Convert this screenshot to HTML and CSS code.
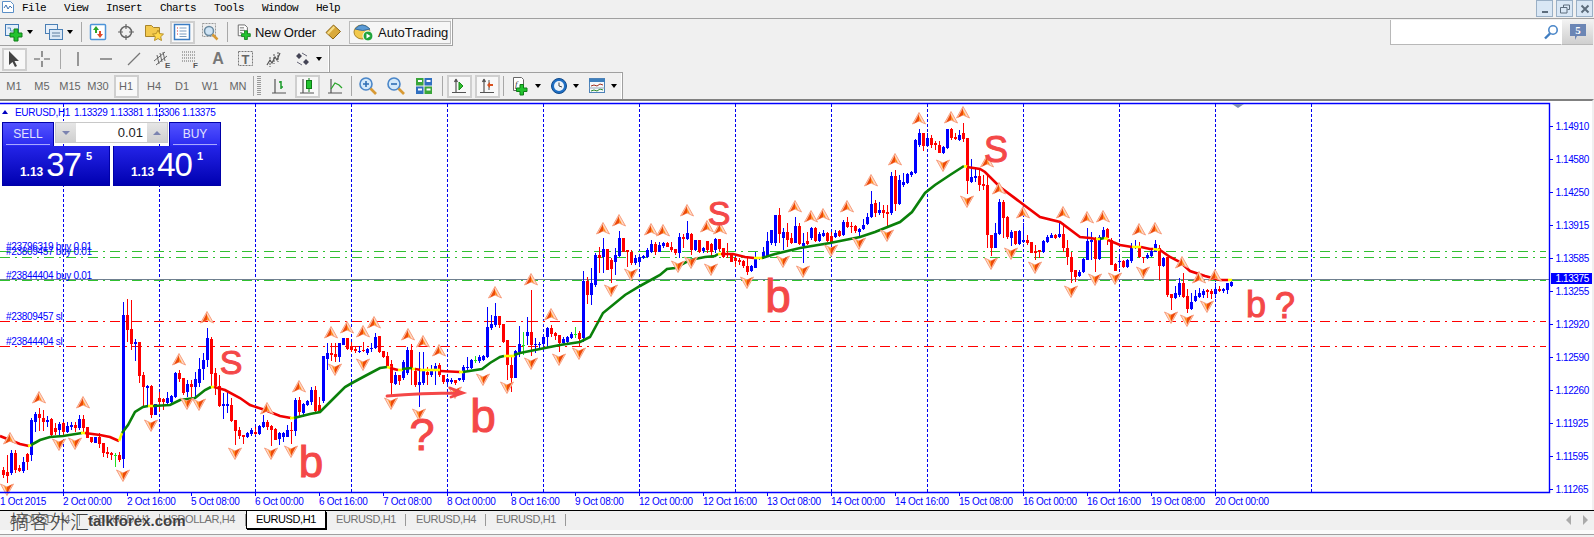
FILE: index.html
```html
<!DOCTYPE html>
<html lang="en">
<head>
    <meta charset="UTF-8">
    <title>MetaTrader 4 - EURUSD,H1</title>
    <link rel="stylesheet" href="styles.css">
</head>
<body>
    <!-- Menu -->
    <div class="menubar">
        <svg class="app-icon" width="14" height="14" viewBox="0 0 14 14"><path d="M1.5 1.5h8l3 3v8h-11z" fill="#fff" stroke="#5b8fc7"/><path d="M3 8l2-3 2 4 2-3 2 2" fill="none" stroke="#3a6fb0"/></svg>
        <nav class="menu">
            <span>File</span><span>View</span><span>Insert</span><span>Charts</span><span>Tools</span><span>Window</span><span>Help</span>
        </nav>
        <div class="window-buttons">
            <button class="win-btn"><svg width="10" height="10" viewBox="0 0 10 10"><path d="M2 7h6v2H2z" fill="#5d6d7d"/></svg></button>
            <button class="win-btn"><svg width="10" height="10" viewBox="0 0 10 10"><path d="M3.5 3V1h6v4.5H7.5M.5 3.5h6.5v5.5H.5z" fill="none" stroke="#5d6d7d"/></svg></button>
            <button class="win-btn"><svg width="10" height="10" viewBox="0 0 10 10"><path d="M1.5 1.5l7 7M8.5 1.5l-7 7" fill="none" stroke="#5d6d7d" stroke-width="2"/></svg></button>
        </div>
    </div>

    <!-- Standard toolbar -->
    <div class="toolrow">
        <div class="toolbar toolbar-standard">
            <div class="tool tool-narrow"><svg width="20" height="20" viewBox="0 0 20 20"><rect x="1.5" y="2.5" width="13" height="11" fill="#e3eefa" stroke="#3f78b4"/><path d="M3.5 6h3v3h3" fill="none" stroke="#5d8fc0"/><path d="M10 7h4v4h4v4h-4v4h-4v-4H6v-4h4z" fill="#22c32e" stroke="#0e7d17"/></svg></div>
            <span class="caret"></span>
            <div class="tool tool-narrow"><svg width="20" height="20" viewBox="0 0 20 20"><rect x="1.5" y="2.5" width="12" height="9" fill="#e8f0f9" stroke="#4a7fb5"/><rect x="5.5" y="7.5" width="13" height="10" fill="#dbe8f6" stroke="#4a7fb5"/><path d="M8 11h8M8 14h8" stroke="#5d7d9d"/></svg></div>
            <span class="caret"></span>
            <span class="sep sep-first"></span>
            <div class="tool"><svg width="20" height="20" viewBox="0 0 20 20"><rect x="2.5" y="2.5" width="15" height="15" rx="1" fill="#fff" stroke="#4d94d8" stroke-width="1.5"/><path d="M8 4l3 4H9v3H7V8H5z" fill="#2aa52a"/><path d="M12 16l-3-4h2V9h2v3h2z" fill="#e04a2a"/></svg></div>
            <div class="tool"><svg width="20" height="20" viewBox="0 0 20 20"><circle cx="10" cy="10" r="5.5" fill="none" stroke="#666" stroke-width="1.5"/><path d="M10 2v5M10 13v5M2 10h5M13 10h5" stroke="#666" stroke-width="1.2"/></svg></div>
            <div class="tool"><svg width="20" height="20" viewBox="0 0 20 20"><path d="M1.5 3.5h6l2 2h6v9h-14z" fill="#f3c94e" stroke="#a8842a"/><path d="M14 8l1.7 3.6 3.8.5-2.800 2.600.8 3.800-3.500-1.900-3.500 1.900.8-3.800-2.800-2.600 3.800-.5z" fill="#ffd84a" stroke="#b8912a"/></svg></div>
            <div class="tool on"><svg width="18" height="18" viewBox="0 0 18 18"><rect x="1.5" y="1.5" width="15" height="15" fill="#fff" stroke="#3a7cc4" stroke-width="1.5"/><path d="M4 5h1M4 8h1M4 11h1" stroke="#d33"/><path d="M6.5 5h7M6.5 8h7M6.5 11h7M6.5 13.5h7" stroke="#7a9cc0"/></svg></div>
            <div class="tool"><svg width="20" height="20" viewBox="0 0 20 20"><rect x="2.5" y="1.5" width="13" height="13" fill="#eee" stroke="#999" stroke-dasharray="2 1"/><circle cx="9" cy="9" r="4.5" fill="#cfe4f5" stroke="#6a8aa0" stroke-width="1.5"/><path d="M12.5 12.5l5 5" stroke="#d89a35" stroke-width="2.5"/></svg></div>
            <span class="sep sep-mid"></span>
            <div class="new-order">
                <svg width="18" height="20" viewBox="0 0 18 20"><path d="M1.5 1.5h8l3 3v10h-11z" fill="#fff" stroke="#555"/><path d="M3.500 5h5M3.500 8h6M3.500 11h3" stroke="#555"/><path d="M9 8.500h3.500V12H16v3.500h-3.500V19H9v-3.500H5.500V12H9z" fill="#22c32e" stroke="#0e7d17"/></svg>
                <span>New Order</span>
            </div>
            <div class="tool tool-gold"><svg width="18" height="18" viewBox="0 0 18 18"><path d="M2 9.5L9.500 2 16.500 8.500 9 16z" fill="#d9a93a" stroke="#8a6312"/><path d="M3 10l6.500-7 1.500 1.500-6.500 7z" fill="#f6dc85"/></svg></div>
            <div class="autotrading">
                <svg width="22" height="20" viewBox="0 0 22 20"><ellipse cx="9" cy="10" rx="8" ry="7" fill="#f2c94c" stroke="#a8842a"/><path d="M2 7q7-8 15 0-7 3-15 0z" fill="#5b9bd5" stroke="#3a6fa0"/><circle cx="15" cy="14" r="5" fill="#1fa33a" stroke="#fff"/><path d="M13.500 11.500v5l4-2.500z" fill="#fff"/></svg>
                <span>AutoTrading</span>
            </div>
        </div>
        <div class="search-area">
            <div class="search-box"><svg width="16" height="16" viewBox="0 0 16 16"><circle cx="10" cy="6" r="4.2" fill="none" stroke="#4a86c8" stroke-width="1.6"/><path d="M7 9.500L2 14.500" stroke="#3f7cc0" stroke-width="2.4"/></svg></div>
            <div class="notify"><svg width="18" height="18" viewBox="0 0 18 18"><path d="M1 1h16v12H8l-2 4v-4H1z" fill="#6b86b5"/><text x="9" y="11" class="notify-num">5</text></svg></div>
        </div>
    </div>

    <!-- Line studies toolbar -->
    <div class="toolrow">
        <div class="toolbar toolbar-studies">
            <div class="tool on"><svg width="16" height="18" viewBox="0 0 16 18"><path d="M3 1v14l3.500-3 2.500 5 2-1-2.500-5H13z" fill="#444"/></svg></div>
            <div class="tool"><svg width="18" height="18" viewBox="0 0 18 18"><path d="M9 1v6M9 11v6M1 9h6M11 9h6" stroke="#555" stroke-width="1.2"/></svg></div>
            <span class="sep sep-tool"></span>
            <div class="tool"><svg width="18" height="18" viewBox="0 0 18 18"><path d="M9 2v14" stroke="#666" stroke-width="1.3"/></svg></div>
            <div class="tool"><svg width="18" height="18" viewBox="0 0 18 18"><path d="M3 9h12" stroke="#666" stroke-width="1.3"/></svg></div>
            <div class="tool"><svg width="18" height="18" viewBox="0 0 18 18"><path d="M3 15L15 3" stroke="#777" stroke-width="1.3"/></svg></div>
            <div class="tool"><svg width="20" height="20" viewBox="0 0 20 20"><path d="M2 12L13 3M4 16L15 7M5 6l2 9M8 4l2 9M11 3l2 9" stroke="#666" fill="none"/><text x="13" y="19" class="tool-letter">E</text></svg></div>
            <div class="tool"><svg width="20" height="20" viewBox="0 0 20 20"><path d="M2 3h14M2 6h14M2 9h14M2 12h14" stroke="#666" stroke-dasharray="1 1"/><text x="13" y="19" class="tool-letter">F</text></svg></div>
            <div class="tool tool-a">A</div>
            <div class="tool"><svg width="18" height="18" viewBox="0 0 18 18"><rect x="1.5" y="1.5" width="14" height="14" fill="none" stroke="#777" stroke-dasharray="2 1"/><text x="8.500" y="13.500" class="tool-t">T</text></svg></div>
            <div class="tool"><svg width="18" height="18" viewBox="0 0 18 18"><path d="M2 15l3-5 2 3 3-6 2 3 3-7" fill="none" stroke="#555" stroke-width="1.2"/><path d="M5 7v10M9 4v10M13 2v10" stroke="#555" stroke-dasharray="2 1"/></svg></div>
            <div class="tool"><svg width="18" height="18" viewBox="0 0 18 18"><path d="M3 6l3-3 3 3-3 3zM10 12l3-3 3 3-3 3z" fill="#445"/><path d="M4 12l5 3M9 3l5 3" stroke="#667"/></svg></div>
            <span class="caret"></span>
        </div>
    </div>

    <!-- Charts and periodicity toolbars -->
    <div class="toolrow toolrow-last">
        <div class="toolbar toolbar-charts">
            <div class="tool period">M1</div>
            <div class="tool period">M5</div>
            <div class="tool period">M15</div>
            <div class="tool period">M30</div>
            <div class="tool period on">H1</div>
            <div class="tool period">H4</div>
            <div class="tool period">D1</div>
            <div class="tool period">W1</div>
            <div class="tool period">MN</div>
            <span class="sep sep-handle"></span>
            <span class="handle"></span>
            <div class="tool"><svg width="18" height="18" viewBox="0 0 18 18"><path d="M5 2v14M2 16h14" stroke="#555" stroke-width="1.2"/><path d="M11 4v8M11 5H9M11 10h2" stroke="#1a9a2a" stroke-width="1.5"/></svg></div>
            <div class="tool on"><svg width="18" height="18" viewBox="0 0 18 18"><path d="M5 2v14M2 16h14" stroke="#555" stroke-width="1.2"/><rect x="8.500" y="3.500" width="5" height="8" fill="#22c32e" stroke="#0e7d17"/><path d="M11 1v2M11 12v3" stroke="#0e7d17"/></svg></div>
            <div class="tool"><svg width="18" height="18" viewBox="0 0 18 18"><path d="M5 2v14M2 16h14" stroke="#555" stroke-width="1.2"/><path d="M5 12l4-6 4 2 3 3" fill="none" stroke="#2aa52a" stroke-width="1.3"/></svg></div>
            <span class="sep sep-zoom"></span>
            <div class="tool"><svg width="20" height="20" viewBox="0 0 20 20"><circle cx="8" cy="8" r="6" fill="#d3e9fa" stroke="#4a86c8" stroke-width="1.6"/><path d="M5 8h6M8 5v6" stroke="#2f6fb5" stroke-width="1.6"/><path d="M12.500 12.500l5.500 5.500" stroke="#d89a35" stroke-width="2.6"/></svg></div>
            <div class="tool"><svg width="20" height="20" viewBox="0 0 20 20"><circle cx="8" cy="8" r="6" fill="#d3e9fa" stroke="#4a86c8" stroke-width="1.6"/><path d="M5 8h6" stroke="#2f6fb5" stroke-width="1.6"/><path d="M12.500 12.500l5.500 5.500" stroke="#d89a35" stroke-width="2.6"/></svg></div>
            <div class="tool"><svg width="18" height="18" viewBox="0 0 18 18"><rect x="1" y="1" width="7.5" height="7.5" fill="#3aa63a"/><rect x="9.5" y="1" width="7.5" height="7.5" fill="#2f6fc0"/><rect x="1" y="9.5" width="7.5" height="7.5" fill="#2f6fc0"/><rect x="9.5" y="9.5" width="7.5" height="7.5" fill="#3aa63a"/><path d="M3 4h4M11.500 4h4M3 12.500h4M11.500 12.500h4" stroke="#fff" stroke-width="2"/></svg></div>
            <span class="sep sep-auto"></span>
            <div class="tool on"><svg width="18" height="18" viewBox="0 0 18 18"><path d="M6 2v14M2 15.500h14M6 2L4.500 5M6 2l1.500 3" fill="none" stroke="#555" stroke-width="1.2"/><path d="M9 5v8l4-4z" fill="#30c030" stroke="#1a8a1a"/></svg></div>
            <div class="tool on"><svg width="18" height="18" viewBox="0 0 18 18"><path d="M6 2v14M2 15.500h14M6 2L4.500 5M6 2l1.500 3" fill="none" stroke="#555" stroke-width="1.2"/><path d="M11 3v10" stroke="#555"/><path d="M9 8l3-3v2h3v2h-3v2z" fill="#d8501e"/></svg></div>
            <span class="sep sep-ind"></span>
            <div class="tool"><svg width="20" height="20" viewBox="0 0 20 20"><path d="M2.500 1.500h8l2 2v11h-10z" fill="#fff" stroke="#666"/><text x="4" y="11" class="tool-f">f</text><path d="M9 8.500h3.500V12H16v3.500h-3.500V19H9v-3.500H5.500V12H9z" fill="#22c32e" stroke="#0e7d17"/></svg></div>
            <span class="caret"></span>
            <div class="tool"><svg width="18" height="18" viewBox="0 0 18 18"><circle cx="9" cy="9" r="7.5" fill="#1f6fc4" stroke="#114a8a"/><circle cx="9" cy="9" r="5" fill="#eef4fa"/><path d="M9 5.500V9l3 1" fill="none" stroke="#444"/></svg></div>
            <span class="caret"></span>
            <div class="tool"><svg width="18" height="18" viewBox="0 0 18 18"><rect x="1.5" y="1.5" width="15" height="14" fill="#f4f8fb" stroke="#4d82b8"/><path d="M1 2h16v3H1z" fill="#3d7fbd"/><path d="M3 9l3-1 3 1 3-2 3 1" fill="none" stroke="#a03020"/><path d="M3 14l3-1 3 1 3-2 3 1" fill="none" stroke="#2a8a2a"/><path d="M1.5 11h15" stroke="#9ab"/></svg></div>
            <span class="caret"></span>
        </div>
    </div>

    <!-- Chart window -->
    <div class="chart">
        <div id="chartCanvas"></div>

        <div class="trade-panel">
            <div class="trade-top">
                <div class="trade-btn">SELL</div>
                <div class="lot">
                    <span class="spin"><i class="tri tri-down"></i></span>
                    <span class="lot-value">0.01</span>
                    <span class="spin"><i class="tri tri-up"></i></span>
                </div>
                <div class="trade-btn">BUY</div>
            </div>
            <div class="trade-prices">
                <div class="quote"><span class="quote-small">1.13</span><span class="quote-big">37</span><span class="quote-sup">5</span></div>
                <div class="quote"><span class="quote-small">1.13</span><span class="quote-big">40</span><span class="quote-sup">1</span></div>
            </div>
        </div>
    </div>

    <!-- Chart tabs -->
    <div class="tabs">
        <div class="tab">AUDUSD,H4</div>
        <div class="tab">GBPUSD,H1</div>
        <div class="tab tab-wide">USDOLLAR,H4</div>
        <div class="tab active">EURUSD,H1</div>
        <div class="tab">EURUSD,H1</div>
        <div class="tab">EURUSD,H4</div>
        <div class="tab">EURUSD,H1</div>
        <div class="tab-arrows"><i class="tri tri-left"></i><i class="tri tri-right"></i></div>
        <div class="watermark"><span class="wm-cn">摘客外汇</span><span class="wm-en">talkforex.com</span></div>
    </div>

    <script src="chart.js"></script>
</body>
</html>
```

FILE: styles.css
```css
:root {
    --chrome: #f0f0f0;
    --line: #a0a0a0;
    --chart-blue: #0000ff;
    --toggle-bg: #f8f8f8;
    --toggle-line: #cfcfcf;
    --tool-text: #666;
}

* {
    box-sizing: border-box;
}

html, body {
    height: 537px;
    overflow: hidden;
}

body {
    margin: 0;
    background: var(--chrome);
    font-family: "Liberation Sans", Arial, sans-serif;
    font-size: 12px;
    color: #111;
}

/* Menu */
.menubar {
    height: 19px;
    display: flex;
    align-items: flex-start;
    border-bottom: 1px solid var(--line);
    position: relative;
}

.app-icon {
    margin: 0 0 0 1px;
}

.menu {
    display: flex;
    gap: 18px;
    margin-left: 7px;
    padding-top: 1px;
    font-family: "Liberation Mono", monospace;
    font-size: 11px;
    letter-spacing: -0.6px;
    line-height: 14px;
    color: #000;
}

.window-buttons {
    margin-left: auto;
    margin-right: 1px;
    display: flex;
    gap: 3px;
}

.win-btn {
    width: 17px;
    height: 17px;
    padding: 0;
    display: flex;
    align-items: center;
    justify-content: center;
    background: #d9e7f5;
    border: 1px solid #9ab0c6;
}

/* Toolbars */
.toolrow {
    display: flex;
    justify-content: space-between;
    height: 27px;
}

.toolrow + .toolrow {
    height: 26px;
}

.toolrow-last.toolrow {
    height: 27px;
    border-bottom: 0;
}

.toolbar {
    display: flex;
    align-items: center;
    border-right: 1px solid var(--line);
    box-shadow: inset -1px 0 0 #fff;
}

.toolbar-standard {
    width: 453px;
    border-bottom: 1px solid var(--line);
}

.toolbar-studies {
    width: 330px;
}

.toolbar-charts {
    width: 623px;
    border-top: 1px solid var(--line);
}

.tool {
    width: 28px;
    height: 24px;
    flex: none;
    display: flex;
    align-items: center;
    justify-content: center;
}

.tool-narrow {
    width: 27px;
}

.tool-narrow + .caret {
    margin-right: 3px;
}

.tool-gold {
    margin-left: 3px;
}

.tool-a {
    font-size: 16px;
    font-weight: bold;
    color: #777;
}

.tool-letter {
    font: bold 8px "Liberation Sans", sans-serif;
    fill: #555;
}

.tool-t {
    font: bold 13px "Liberation Sans", sans-serif;
    fill: #666;
    text-anchor: middle;
}

.tool-f {
    font: italic 9px "Liberation Serif", serif;
    fill: #333;
}

.tool.on {
    width: 25px;
    height: 23px;
    margin: 0 1.5px;
    background: var(--toggle-bg);
    border: 2px solid var(--toggle-line);
}

.period {
    font-size: 11px;
    color: var(--tool-text);
}

.sep {
    width: 1px;
    height: 20px;
    flex: none;
    background: #a8a8a8;
}

.sep-first { margin: 0 2px 0 1px; }
.sep-mid { margin: 0 0 0 3px; }
.sep-tool { margin: 0 3px 0 4px; }
.sep-handle { margin: 0 3px 0 1px; }
.sep-zoom { margin: 0 2px; }
.sep-auto { margin: 0 2px 0 4px; }
.sep-ind { margin: 0 3px 0 2px; }

.handle {
    width: 4px;
    height: 20px;
    flex: none;
    margin-right: 4px;
    background: repeating-linear-gradient(#999 0 1px, transparent 1px 2px);
}

.caret {
    width: 10px;
    height: 4px;
    flex: none;
    position: relative;
}

.caret::before {
    content: "";
    position: absolute;
    left: 0;
    top: 0;
    border-style: solid;
    border-width: 4px 3.5px 0;
    border-color: #000 transparent transparent;
}

.new-order {
    display: flex;
    align-items: center;
    gap: 3px;
    margin-left: 9px;
    font-size: 13px;
    width: 79px;
    flex: none;
    white-space: nowrap;
}

.new-order span {
    letter-spacing: -0.2px;
}

.autotrading {
    width: 102px;
    height: 23px;
    flex: none;
    margin-left: 2px;
    display: flex;
    align-items: center;
    gap: 3px;
    padding-left: 3px;
    font-size: 13px;
    background: #f6f6f6;
    border: 1px solid #bbb;
}

/* Search */
.search-area {
    display: flex;
    height: 25px;
    margin-top: 1px;
    margin-right: 1px;
    width: 203px;
}

.search-box {
    width: 171px;
    display: flex;
    align-items: center;
    justify-content: flex-end;
    padding-right: 2px;
    background: #fff;
    border-left: 1px solid #b8b8b8;
    border-bottom: 1px solid #b8b8b8;
}

.notify {
    flex: 1;
    display: flex;
    align-items: center;
    justify-content: center;
    background: linear-gradient(#f2f2f2, #cfcfcf);
    border-bottom: 1px solid #b8b8b8;
    border-left: 1px solid #fff;
}

.notify-num {
    font: bold 11px "Liberation Serif", serif;
    fill: #fff;
    text-anchor: middle;
}

/* Chart */
.chart {
    height: 411px;
    position: relative;
    background: #fff;
    border-top: 2px solid #808080;
    border-right: 2px solid var(--chrome);
}

#chartCanvas svg {
    display: block;
}

.axis-text {
    font: 10px "Liberation Sans", Arial, sans-serif;
    letter-spacing: -0.3px;
    fill: var(--chart-blue);
}

.price-text {
    letter-spacing: -0.4px;
}

.price-now {
    fill: #fff;
}

.scribble {
    font-family: "Liberation Sans", Arial, sans-serif;
    fill: #f44848;
    stroke: #f44848;
    stroke-width: 1px;
    text-anchor: middle;
}

/* One click trading panel */
.trade-panel {
    position: absolute;
    left: 2px;
    top: 21px;
    width: 219px;
    color: #fff;
}

.trade-top {
    display: flex;
    height: 24px;
}

.trade-btn {
    width: 52px;
    flex: none;
    padding-top: 3px;
    text-align: center;
    font-size: 12px;
    line-height: 17px;
    color: #e2e2ff;
    background: linear-gradient(#5252ff, #2a2af0);
    border: 1px solid #0000a8;
    border-bottom: 0;
    position: relative;
}

.trade-btn::after {
    content: "";
    position: absolute;
    left: 3px;
    right: 3px;
    bottom: 1px;
    height: 1px;
    background: #a8a8ff;
}

.lot {
    flex: 1;
    display: flex;
    margin: 0 1px 3px;
    background: #fff;
    border: 1px solid #c8c8c8;
    box-shadow: 0 0 0 1px #fff;
    color: #222;
}

.spin {
    width: 20px;
    flex: none;
    display: flex;
    align-items: center;
    justify-content: center;
    background: linear-gradient(#e6e6e6, #cfcfcf);
}

.lot-value {
    flex: 1;
    padding-right: 4px;
    text-align: right;
    font-size: 13px;
    line-height: 20px;
}

.trade-prices {
    display: flex;
    gap: 3px;
}

.quote {
    flex: 1;
    height: 40px;
    display: flex;
    justify-content: center;
    align-items: baseline;
    padding-top: 2px;
    background: linear-gradient(#2424e8, #0000b0);
    border: 1px solid #0000a8;
    border-top: 0;
    line-height: 34px;
}

.quote-small {
    font-size: 12px;
    font-weight: bold;
    margin-right: 3px;
}

.quote-big {
    font-size: 33px;
    letter-spacing: -1px;
}

.quote-sup {
    font-size: 11px;
    font-weight: bold;
    margin-left: 5px;
    position: relative;
    top: -16px;
}

.tri {
    display: block;
    width: 0;
    height: 0;
    border-style: solid;
}

.tri-down {
    border-width: 4px 4px 0;
    border-color: #7b83b0 transparent transparent;
}

.tri-up {
    border-width: 0 4px 4px;
    border-color: transparent transparent #7b83b0;
}

.tri-left {
    border-width: 5px 5px 5px 0;
    border-color: transparent #aaa transparent transparent;
}

.tri-right {
    border-width: 5px 0 5px 5px;
    border-color: transparent transparent transparent #aaa;
}

/* Tabs */
.tabs {
    height: 25px;
    display: flex;
    align-items: flex-start;
    position: relative;
    font-size: 11px;
    letter-spacing: -0.4px;
    color: #707070;
    border-top: 1px solid #000;
    box-shadow: inset 0 -1px 0 var(--line), inset 0 -5px 0 #fbfbfb;
}

.tab {
    width: 80px;
    height: 18px;
    flex: none;
    line-height: 17px;
    text-align: center;
    position: relative;
}

.tab-wide {
    width: 86px;
    padding-right: 8px;
}

.tab::after {
    content: "";
    position: absolute;
    right: 0;
    top: 3px;
    height: 12px;
    border-right: 1px solid #999;
}

.tab.active {
    background: #fff;
    color: #000;
    border: 1px solid #000;
    border-top: 0;
    box-shadow: 1px 1px 0 #000;
}

.tab.active::after {
    display: none;
}

.tab-arrows {
    margin-left: auto;
    margin-right: 6px;
    margin-top: 4px;
    display: flex;
    gap: 12px;
}

.watermark {
    position: absolute;
    left: 10px;
    top: -2px;
    display: flex;
    align-items: center;
    height: 22px;
    color: #404040;
    letter-spacing: 0;
}

.wm-cn {
    width: 78px;
    font-family: "Noto Sans CJK SC", sans-serif;
    font-size: 19px;
    font-weight: 300;
    letter-spacing: 1px;
    white-space: nowrap;
}

.wm-en {
    font-size: 15px;
    font-weight: bold;
    text-shadow: 0 0 2px #fff;
}
```

FILE: chart.js
```js
// [colour, body top, body bottom, high, low] in page pixels, one bar every 4px
const BARS = [
    ['r',470,475,467,478],['r',472,476,455,483],['b',453,473,450,475],['r',453,470,450,473],['r',468,471,465,472],
    ['b',462,471,457,473],['r',454,462,453,470],['b',420,455,418,461],['b',414,422,412,432],['r',414,418,408,431],
    ['r',418,422,410,431],['b',420,422,416,427],['r',419,435,418,436],['r',428,432,423,435],['b',424,430,422,436],
    ['r',423,432,422,436],['b',426,432,422,433],['b',425,427,422,430],['r',425,428,422,432],['b',419,428,415,430],
    ['r',419,428,415,433],['r',427,438,427,438],['r',437,442,437,443],['b',437,443,437,443],['r',437,444,433,448],
    ['r',443,453,443,457],['r',452,454,447,458],['r',453,455,452,460],['g',455,456,453,467],['r',455,460,452,462],
    ['b',315,459,302,468],['r',315,330,299,342],['r',329,344,300,350],['b',342,344,339,361],['r',342,376,342,383],
    ['r',375,387,372,407],['b',386,388,385,406],['r',386,415,385,418],['b',404,415,404,415],['r',398,402,392,412],
    ['r',399,402,398,410],['b',398,403,392,406],['b',396,402,395,403],['b',373,397,372,398],['r',373,379,370,382],
    ['r',378,393,378,395],['b',384,392,380,397],['r',384,387,380,397],['b',379,387,372,397],['b',369,383,358,387],
    ['b',360,369,353,380],['b',338,360,328,367],['r',339,374,337,387],['r',373,386,368,395],['r',386,406,375,407],
    ['b',404,406,393,419],['b',404,406,392,413],['r',405,421,398,422],['r',420,431,420,445],['r',430,436,427,439],
    ['r',435,437,435,444],['b',433,437,432,438],['b',430,434,428,436],['r',432,434,427,435],['b',426,434,425,435],
    ['b',422,427,415,428],['r',422,427,420,430],['r',426,430,425,446],['r',429,440,428,440],['b',433,439,432,445],
    ['b',433,437,432,442],['b',430,437,425,437],['r',430,431,422,444],['b',400,431,398,436],['r',400,412,397,417],
    ['b',404,413,403,417],['b',401,405,400,406],['b',390,402,387,405],['r',390,411,386,412],['r',405,411,397,412],
    ['b',356,401,356,403],['b',353,359,343,370],['r',353,355,343,361],['r',354,357,343,362],['b',343,357,343,362],
    ['b',338,345,338,345],['r',338,349,338,350],['r',346,350,342,352],['r',349,351,347,353],['b',351,352,346,353],
    ['r',350,351,342,352],['b',349,353,348,355],['b',348,349,343,352],['b',337,348,333,349],['r',336,352,336,353],
    ['r',351,357,351,358],['r',356,366,352,367],['r',364,383,360,395],['b',375,384,372,385],['r',375,381,375,385],
    ['b',362,378,360,380],['b',350,373,347,375],['r',350,368,344,385],['r',371,385,370,387],['b',382,385,352,407],
    ['b',370,383,352,385],['r',372,375,367,385],['b',369,375,365,377],['b',366,370,363,385],['r',365,375,363,377],
    ['r',375,382,375,384],['b',379,382,378,384],['b',380,382,378,384],['r',380,383,380,385],['b',378,380,378,381],
    ['b',367,380,365,382],['b',367,368,357,370],['b',360,368,359,369],['g',360,361,356,363],['b',357,361,355,363],
    ['b',356,360,355,361],['b',327,357,307,358],['b',324,328,315,330],['b',316,325,303,327],['r',316,325,316,328],
    ['r',324,342,324,343],['r',340,365,340,380],['r',365,378,357,392],['b',351,378,350,374],['b',344,352,326,357],
    ['g',345,346,332,355],['b',332,336,317,345],['r',332,345,290,356],['b',344,345,338,353],['b',344,345,342,350],
    ['b',337,344,335,352],['b',328,337,327,348],['r',328,334,325,337],['r',333,336,332,340],['r',335,343,335,352],
    ['b',339,343,337,345],['b',337,342,336,343],['b',334,338,332,339],['g',334,335,327,338],['r',333,339,331,347],
    ['b',281,338,271,342],['r',281,295,277,304],['b',283,295,268,305],['b',255,285,253,287],['r',255,258,247,273],
    ['b',249,257,238,273],['r',249,270,249,270],['r',260,269,258,283],['b',255,262,248,275],['b',238,256,231,257],
    ['r',238,252,238,252],['r',250,252,250,267],['r',252,263,250,265],['b',258,263,255,265],['b',257,262,255,267],
    ['b',256,258,255,259],['b',250,257,248,258],['b',244,252,240,253],['r',244,252,242,255],['b',245,252,242,252],
    ['b',243,246,242,248],['r',243,247,242,247],['r',247,250,242,252],['r',249,253,249,255],['b',237,253,233,258],
    ['r',237,239,234,248],['b',233,239,221,240],['r',234,250,233,255],['b',240,250,240,251],['r',240,252,240,253],
    ['b',248,251,247,253],['r',241,250,241,253],['r',244,252,243,258],['b',239,250,238,253],['r',239,249,239,251],
    ['r',248,257,248,258],['r',253,255,243,258],['r',255,262,253,262],['r',258,261,257,267],['r',260,262,258,265],
    ['r',261,266,260,268],['r',266,272,258,275],['b',266,271,265,272],['b',258,268,252,268],['b',257,258,257,260],
    ['b',252,257,247,259],['b',241,257,232,257],['b',230,243,230,245],['b',215,243,215,246],['r',215,234,208,243],
    ['b',232,238,228,250],['r',232,240,223,247],['r',238,243,233,244],['b',226,243,217,243],['r',226,244,223,245],
    ['b',243,246,233,263],['r',241,244,232,245],['b',228,238,227,240],['r',228,241,227,242],['b',234,241,232,242],
    ['b',233,236,230,237],['r',233,241,232,242],['r',236,242,232,243],['b',233,237,230,238],['r',231,236,230,237],
    ['b',222,235,220,236],['r',222,227,217,228],['r',226,227,222,233],['r',226,231,225,233],['b',229,232,228,237],
    ['b',225,229,219,230],['b',217,224,213,225],['b',204,217,191,218],['r',203,213,200,217],['b',210,213,202,215],
    ['r',210,213,205,218],['r',212,214,205,227],['b',176,213,172,215],['r',176,204,170,211],['b',180,204,175,205],
    ['b',182,185,173,187],['b',174,183,173,184],['b',172,175,171,177],['b',140,173,139,174],['b',133,145,129,147],
    ['r',133,146,133,151],['b',138,146,133,147],['r',138,145,135,148],['r',143,145,141,150],['r',145,153,141,153],
    ['b',147,153,146,154],['b',129,148,129,149],['r',129,138,128,140],['r',137,139,133,140],['b',135,140,130,141],
    ['r',133,139,123,142],['r',138,181,138,194],['b',177,182,159,183],['b',176,178,168,182],['r',176,185,168,191],
    ['r',184,186,175,190],['r',185,235,175,248],['r',235,248,235,256],['b',233,248,223,248],['b',202,234,199,235],
    ['r',202,218,200,238],['r',217,237,216,239],['b',232,238,230,246],['r',231,244,231,245],['b',231,244,230,245],
    ['b',240,242,223,243],['r',240,243,235,245],['r',242,253,242,253],['r',251,253,245,260],['r',250,252,250,258],
    ['b',241,252,240,253],['b',237,242,235,243],['b',235,238,233,238],['r',235,238,234,239],['b',234,237,223,238],
    ['r',234,248,223,252],['r',248,257,240,265],['r',257,272,252,283],['r',270,277,270,282],['b',272,276,270,277],
    ['b',259,272,258,273],['b',241,260,228,260],['b',240,242,232,260],['r',240,259,237,272],['b',237,259,235,260],
    ['b',230,238,227,239],['r',229,238,228,245],['r',240,265,238,265],['r',264,271,263,271],['b',261,262,257,268],
    ['r',261,267,260,268],['b',260,267,259,268],['b',247,261,243,263],['b',247,248,240,249],['r',247,257,242,258],
    ['r',257,258,257,263],['b',255,258,253,259],['b',251,256,248,257],['b',244,252,240,252],['r',248,266,245,280],
    ['b',258,266,257,267],['r',257,295,257,297],['r',294,298,294,310],['b',293,298,286,299],['b',283,295,278,297],
    ['r',283,297,273,298],['r',296,309,289,313],['b',302,309,293,310],['b',296,301,290,302],['b',293,297,288,298],
    ['b',291,295,289,298],['r',290,292,289,298],['r',291,294,289,299],['b',289,294,283,298],['r',289,291,286,292],
    ['b',289,291,288,293],['b',283,290,283,294],['b',282,286,279,287]
];

// moving average pieces: it flips colour on each trend change, with a short yellow link
const MA = [
    ['r','0,436 10,440 20,444 29,446'],['y','28,446 32,445'],['g','31,445 40,440 50,437 63,436 82,433'],
    ['y','81,433 86,433'],['r','85,433 100,435 110,437 119,441'],['y','119,441 122,433'],
    ['g','122,433 128,425 135,412 143,407 148,406'],['y','148,406 154,406'],
    ['g','153,406 170,405 180,400 195,398 205,390 211,387'],['y','211,387 215,387'],
    ['r','214,387 225,390 240,398 250,405 265,410 280,416 291,418'],['y','290,418 295,418'],
    ['g','294,418 310,414 320,412 335,397 345,387 352,383 365,376 380,368 387,367'],['y','387,367 391,368'],
    ['r','390,368 398,370'],['y','398,370 403,370'],['g','402,369 412,368'],['y','412,369 416,369'],
    ['r','415,369 421,370'],['y','420,370 440,370'],['r','440,371 460,372'],['y','459,372 464,372'],
    ['g','463,372 482,369 490,363 500,357 504,356'],['y','504,356 515,356'],
    ['g','514,355 520,353 540,349 560,345 580,342 590,337 603,313 625,295 640,286 660,275 667,269 675,268 690,260 705,257 715,256 718,254'],
    ['y','718,254 722,254'],['r','721,254 733,254 745,257 754,258'],['y','754,258 763,258'],
    ['g','762,258 775,254 800,248 830,243 860,237 875,232 900,222 912,212 925,193 935,185 950,175 964,166'],
    ['y','964,166 968,167'],['r','967,167 980,169 985,172 1000,187 1020,202 1040,217 1060,222 1080,237 1090,238 1096,239'],
    ['y','1096,239 1100,239'],['g','1100,239 1104,238'],['y','1104,238 1108,239'],['r','1108,240 1120,245 1132,247'],
    ['y','1132,247 1141,247'],['r','1141,247 1150,249 1153,249'],['y','1153,249 1160,250'],
    ['r','1160,250 1170,257 1180,262 1190,271 1205,276 1220,280 1228,280'],['y','1228,280 1232,280']
];

const ARROWS_UP = [
    [39,398],[83,403],[10,439],[179,360],[207,318],[331,333],[347,328],[363,332],[374,323],[299,387],[267,409],[408,335],
    [423,342],[439,351],[495,293],[531,280],[551,315],[603,229],[619,221],[651,230],[663,231],[687,211],[707,227],[720,229],
    [795,207],[811,217],[823,215],[847,207],[871,181],[895,160],[919,119],[951,118],[963,113],[987,162],[999,189],[1023,213],
    [1063,213],[1087,218],[1103,217],[1139,230],[1155,229],[1182,263],[1199,278],[1215,276]
];

const ARROWS_DOWN = [
    [7,489],[59,444],[75,443],[123,475],[151,425],[187,403],[199,404],[235,453],[271,453],[291,451],[335,369],[363,364],
    [391,403],[419,414],[455,392],[483,379],[507,387],[531,363],[559,359],[579,353],[611,290],[631,274],[678,266],[691,262],
    [711,269],[747,282],[783,261],[803,271],[831,250],[859,243],[887,235],[943,165],[967,201],[991,263],[1011,253],[1035,267],
    [1071,291],[1095,279],[1115,278],[1143,272],[1171,317],[1187,320],[1207,306]
];

// the red marks somebody wrote on the chart
const SCRIBBLES = [
    ['S',231,374,34],['S',719,225,34],['S',996,162,36],
    ['b',311,477,44],['b',483,432,46],['b',778,312,46],['b',1256,317,36],
    ['?',422,450,45],['?',1285,318,36]
];

const TIMES = ['2 Oct 00:00','2 Oct 16:00','5 Oct 08:00','6 Oct 00:00','6 Oct 16:00','7 Oct 08:00','8 Oct 00:00','8 Oct 16:00',
    '9 Oct 08:00','12 Oct 00:00','12 Oct 16:00','13 Oct 08:00','14 Oct 00:00','14 Oct 16:00','15 Oct 08:00','16 Oct 00:00',
    '16 Oct 16:00','19 Oct 08:00','20 Oct 00:00'];

const PRICES = ['1.14910','1.14580','1.14250','1.13915','1.13585','1.13255','1.12920','1.12590','1.12260','1.11925','1.11595','1.11265'];

const ORDER_LABELS = [
    ['#23796319 buy 0.01',250],['#23809457 buy 0.01',255],['#23844404 buy 0.01',279],['#23809457 sl',320],['#23844404 sl',345]
];

const COLORS = { b: '#0000ff', r: '#ff0000', g: '#20e020' };
const MA_COLORS = { r: '#f00000', g: '#0a800a', y: '#ffff00' };

function drawChart() {
    let s = '<svg width="1592" height="409" viewBox="0 101 1592 409">';

    s += '<defs>'
        + '<g id="arrowUp"><path d="M0-6.5L6.5 5 0 2-6.5 5z" fill="#ffd8c4" stroke="#f8a080"/><path d="M0-5L-5 4.500 0 2z" fill="#ee4a08"/><path d="M0-3L3 3 0 1.500z" fill="#ff8a20"/></g>'
        + '<g id="arrowDown"><path d="M0 6.5L6.5-5 0-2-6.500-5z" fill="#ffd8c4" stroke="#f8a080"/><path d="M0 4L-3-3 0-1.500z" fill="#ff8a20"/><path d="M0 5L5-4.500 0-2z" fill="#ee4a08"/></g>'
        + '</defs>';

    // period separators
    for (let k = 0; k < 14; k++) {
        const x = 63.5 + 96 * k;
        s += `<path d="M${x} 104V492" stroke="#0000f0" stroke-dasharray="3 2"/>`;
    }

    // order levels
    [[251.5,'#30c030'],[257.5,'#30c030'],[280.5,'#30c030'],[321.5,'#ff0000'],[346.5,'#ff0000']].forEach(([y, color]) => {
        s += `<path d="M0 ${y}H1546" stroke="${color}" stroke-dasharray="10 5 2 5"/>`;
    });
    s += '<path d="M0 279.5H1549" stroke="#708090"/>';

    // candles
    BARS.forEach(([c, top, bottom, high, low], i) => {
        const x = 3 + 4 * i;
        s += `<rect x="${x}" y="${high}" width="1" height="${low - high}" fill="${COLORS[c]}"/>`;
        s += `<rect x="${x - 1}" y="${top}" width="3" height="${Math.max(bottom - top, 1)}" fill="${COLORS[c]}"/>`;
    });

    MA.forEach(([c, points]) => {
        s += `<polyline points="${points}" fill="none" stroke="${MA_COLORS[c]}" stroke-width="2.6"/>`;
    });

    ARROWS_UP.forEach(([x, y]) => { s += `<use href="#arrowUp" x="${x}" y="${y}"/>`; });
    ARROWS_DOWN.forEach(([x, y]) => { s += `<use href="#arrowDown" x="${x}" y="${y}"/>`; });

    SCRIBBLES.forEach(([t, x, y, size]) => {
        s += `<text class="scribble" x="${x}" y="${y}" font-size="${size}">${t}</text>`;
    });
    s += '<path d="M387 396Q420 393 462 393M450 388L463 393 451 397" fill="none" stroke="#f44848" stroke-width="2.8" stroke-linecap="round"/>';

    // frame
    s += '<path d="M0 103.5H1549.5V492.5H0" fill="none" stroke="#0000ff" stroke-width="1.4"/>';
    s += '<path d="M1232 104h12l-6 4z" fill="#7d8cb5"/>';

    // header and order labels
    s += '<path d="M2 114l3-4 3 4z" fill="#0000c0"/>';
    s += '<text class="axis-text" x="15" y="116">EURUSD,H1</text>';
    ['1.13329','1.13381','1.13306','1.13375'].forEach((p, i) => {
        s += `<text class="axis-text price-text" x="${74 + 36 * i}" y="116">${p}</text>`;
    });
    ORDER_LABELS.forEach(([t, y]) => { s += `<text class="axis-text" x="6" y="${y}">${t}</text>`; });

    // price axis
    PRICES.forEach((p, i) => {
        const y = 125.7 + 33 * i;
        s += `<path d="M1550 ${Math.round(y) + 0.5}h3" stroke="#0000ff"/>`;
        s += `<text class="axis-text price-text" x="1555.5" y="${y + 4}">${p}</text>`;
    });
    s += '<rect x="1551" y="273" width="41" height="11" fill="#0000ff"/>';
    s += '<text class="axis-text price-text price-now" x="1555.5" y="282">1.13375</text>';

    // time axis
    s += '<text class="axis-text" x="0" y="505">1 Oct 2015</text>';
    TIMES.forEach((t, i) => {
        const x = 63 + 64 * i;
        s += `<path d="M${x + 0.5} 492v4" stroke="#0000ff"/>`;
        s += `<text class="axis-text" x="${x}" y="505">${t}</text>`;
    });

    s += '</svg>';
    document.getElementById('chartCanvas').innerHTML = s;
}

drawChart();
```
